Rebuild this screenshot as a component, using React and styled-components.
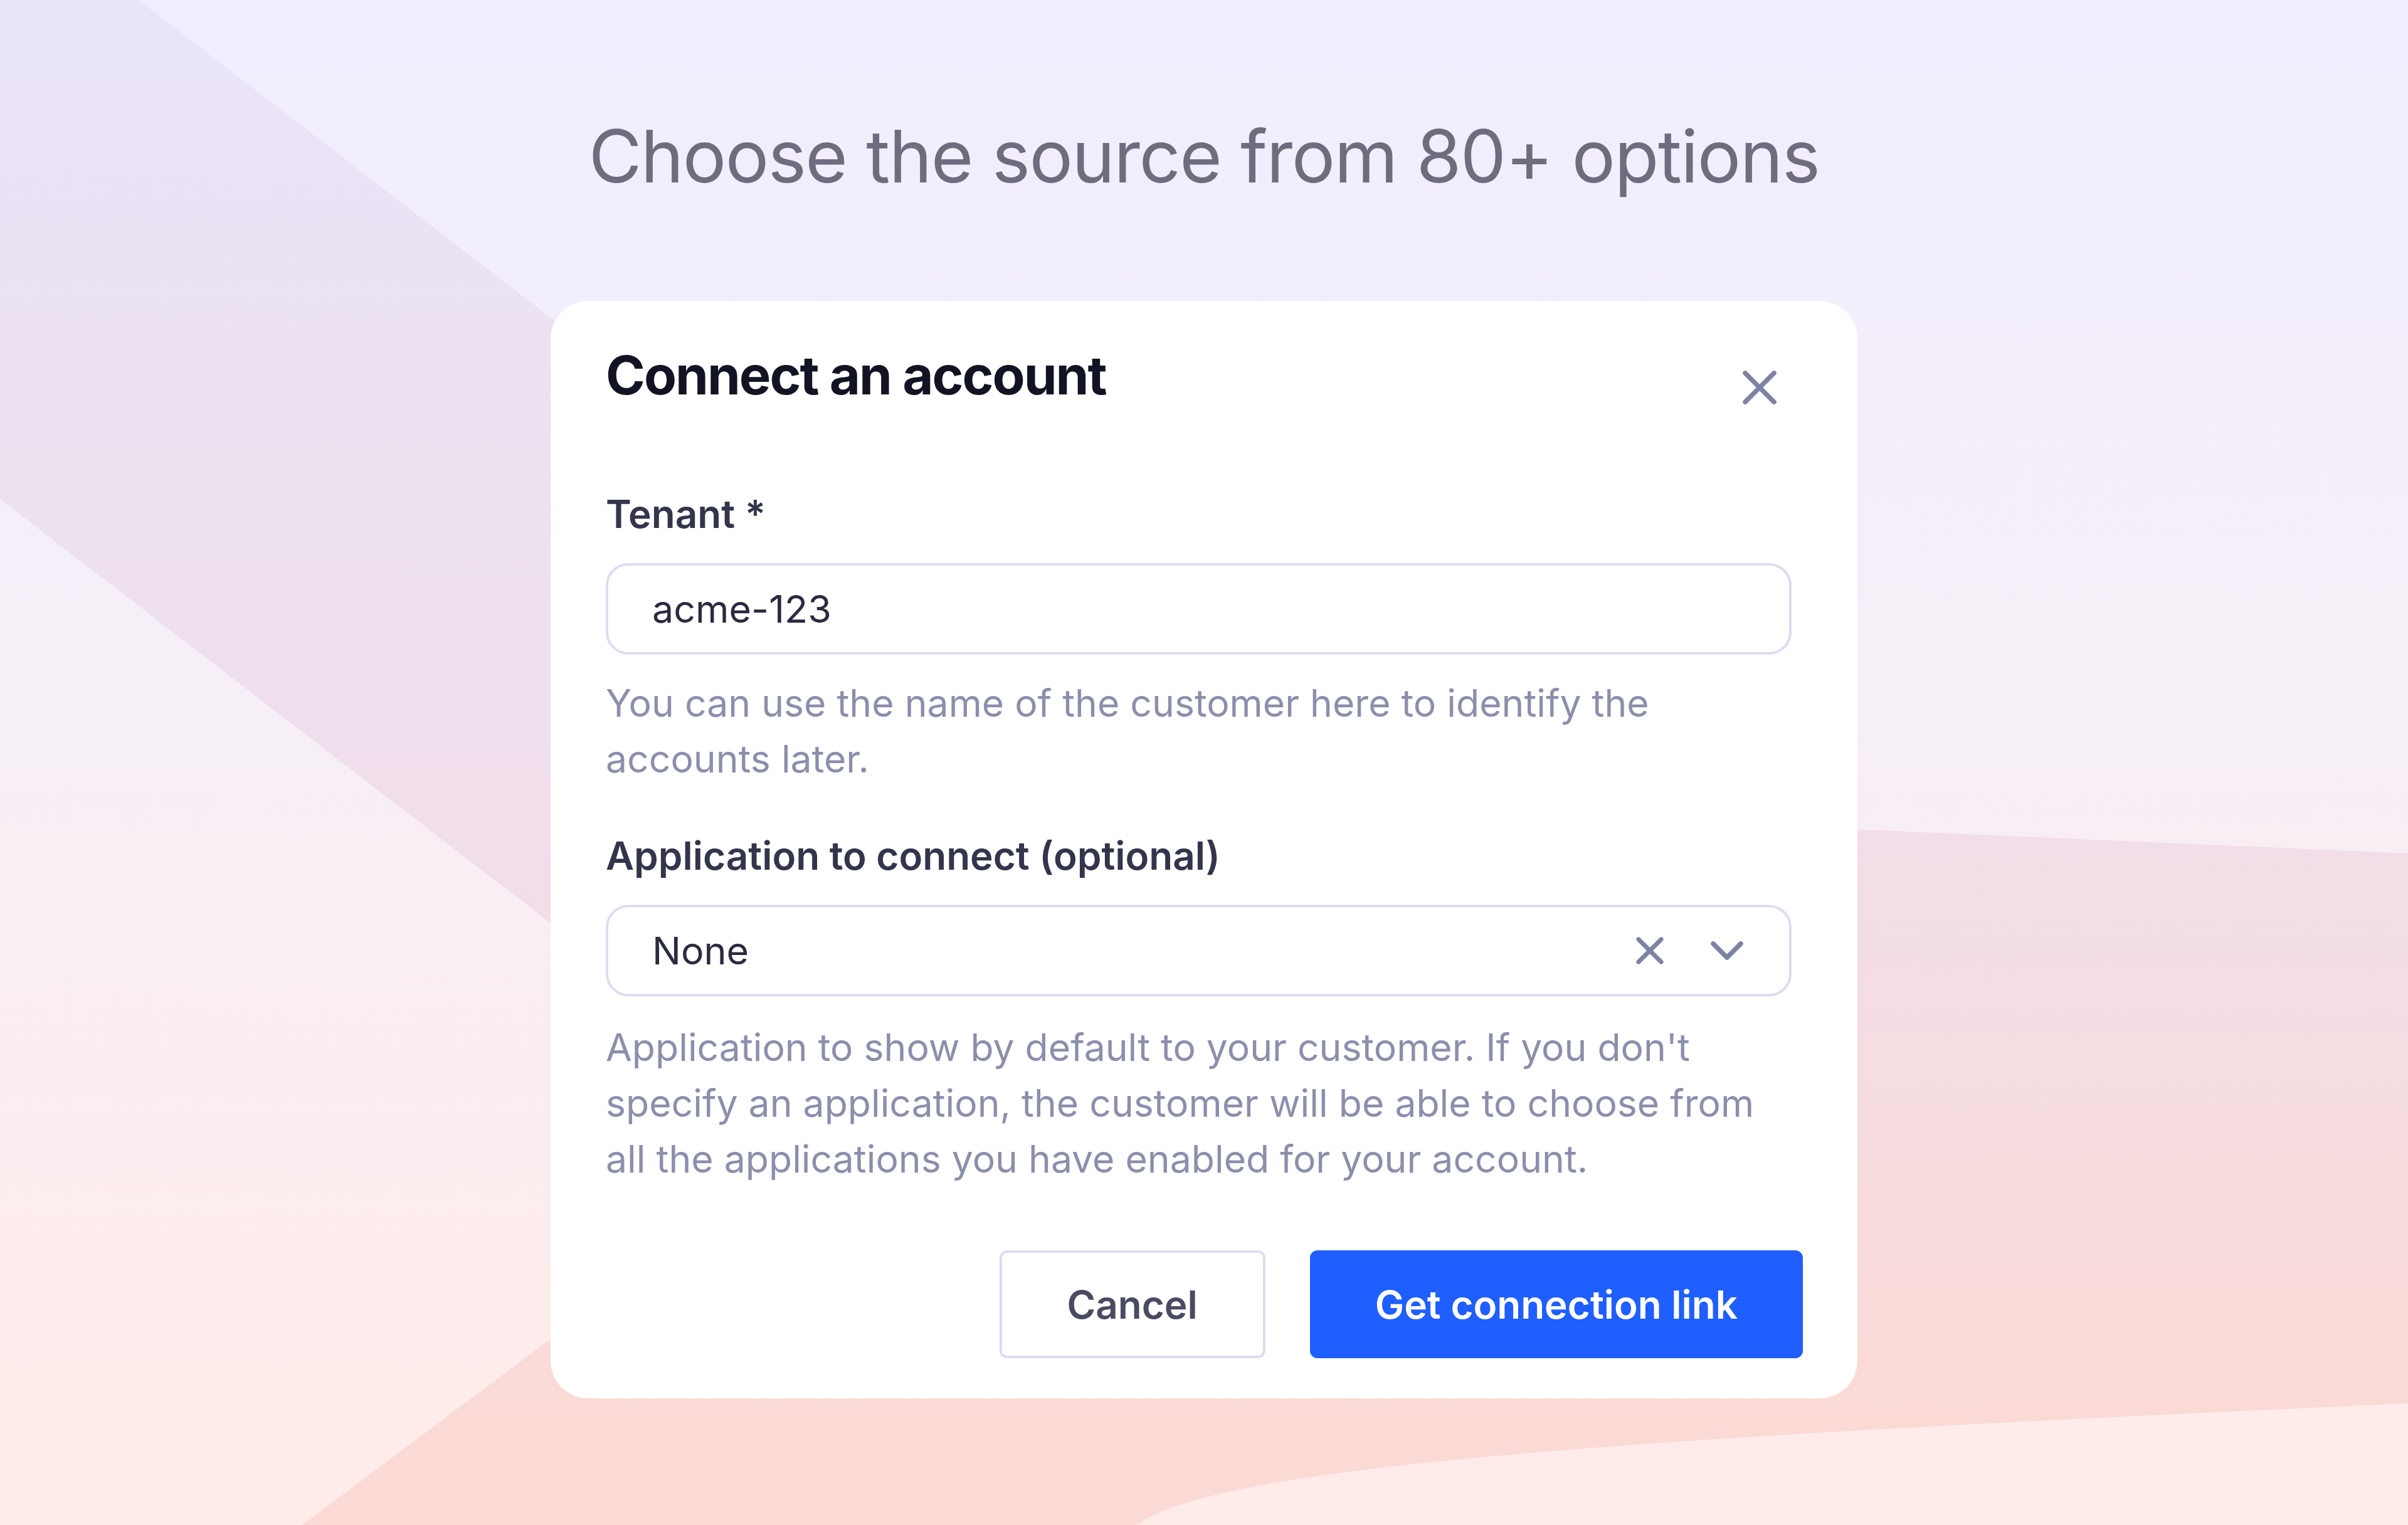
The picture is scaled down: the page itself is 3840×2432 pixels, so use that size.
import React from "react";
import styled, { createGlobalStyle } from "styled-components";

const GlobalStyle = createGlobalStyle`
  html, body {
    margin: 0;
    padding: 0;
  }
  body {
    font-family: Inter, "Noto Sans", "Liberation Sans", sans-serif;
    -webkit-font-smoothing: antialiased;
  }
  * {
    box-sizing: border-box;
  }
`;

const Page = styled.div`
  position: relative;
  width: 3840px;
  height: 2432px;
  overflow: hidden;
  background: #f0edfe;
`;

const Backdrop = styled.svg`
  position: absolute;
  inset: 0;
  width: 100%;
  height: 100%;
  z-index: 0;
`;

const Content = styled.main`
  position: relative;
  z-index: 1;
  display: flex;
  flex-direction: column;
  align-items: center;
  padding-top: 180px;
`;

const Headline = styled.h1`
  margin: 0 0 161px;
  font-size: 116px;
  line-height: 139px;
  font-weight: 400;
  letter-spacing: -1.6px;
  color: #6f6c80;
`;

const Card = styled.section`
  width: 2084px;
  background: #ffffff;
  border-radius: 60px;
  padding: 68px 87px 64px 88px;
  display: flex;
  flex-direction: column;
`;

const Header = styled.header`
  display: flex;
  justify-content: space-between;
  align-items: flex-start;
`;

const Title = styled.h2`
  margin: 0;
  font-size: 85px;
  line-height: 102px;
  font-weight: 700;
  letter-spacing: -2px;
  color: #121424;
`;

const IconButton = styled.button`
  display: flex;
  align-items: center;
  justify-content: center;
  padding: 0;
  border: none;
  background: none;
  color: #7d83a3;
  margin-top: ${(p) => p.$top || 0}px;
  margin-right: ${(p) => p.$right || 0}px;
  cursor: pointer;
`;

const Field = styled.div`
  display: flex;
  flex-direction: column;
  margin-top: ${(p) => p.$top}px;
  margin-right: 18px;
`;

const Label = styled.label`
  font-size: 62px;
  line-height: 90px;
  font-weight: 600;
  color: #33354c;
`;

const Box = styled.div`
  margin-top: 33px;
  height: 146px;
  border: 4px solid #dddcf0;
  border-radius: 36px;
  padding: 0 73px 0 70px;
  display: flex;
  align-items: center;
  gap: 75px;
  font-size: 61px;
  color: #2a2b3f;
`;

const Value = styled.span`
  flex: 1;
`;

const Help = styled.p`
  margin: ${(p) => p.$top}px 0 0;
  font-size: 60.7px;
  line-height: 89px;
  font-weight: 400;
  color: #8b8fab;
`;

const Actions = styled.div`
  display: flex;
  justify-content: flex-end;
  gap: 71px;
  margin-top: 101px;
`;

const Button = styled.button`
  height: 172px;
  padding: 0 ${(p) => (p.$primary ? 100 : 104)}px;
  border-radius: 12px;
  font-family: inherit;
  font-size: 62px;
  font-weight: 600;
  border: 4px solid ${(p) => (p.$primary ? "#1f5eff" : "#dcdbef")};
  background: ${(p) => (p.$primary ? "#1f5eff" : "#ffffff")};
  color: ${(p) => (p.$primary ? "#ffffff" : "#4a4b60")};
`;

const CloseIcon = ({ size = 56, stroke = 7.5 }) => (
  <svg width={size} height={size} viewBox="0 0 56 56" fill="none">
    <path
      d="M5 5 L51 51 M51 5 L5 51"
      stroke="currentColor"
      strokeWidth={stroke}
      strokeLinecap="round"
    />
  </svg>
);

const ChevronIcon = () => (
  <svg width="52" height="30" viewBox="0 0 52 30" fill="none">
    <path
      d="M4 4 L26 26 L48 4"
      stroke="currentColor"
      strokeWidth="7.5"
      strokeLinecap="round"
      strokeLinejoin="round"
    />
  </svg>
);

const Background = () => (
  <Backdrop viewBox="0 0 3840 2432" preserveAspectRatio="none">
    <defs>
      <linearGradient id="base" x1="0" y1="0" x2="0" y2="1">
        <stop offset="0" stopColor="#f0edfe" />
        <stop offset="0.45" stopColor="#f6eff7" />
        <stop offset="1" stopColor="#ffebe8" />
      </linearGradient>
      <linearGradient id="band" gradientUnits="userSpaceOnUse" x1="0" y1="0" x2="0" y2="1500">
        <stop offset="0" stopColor="#e9e5f8" />
        <stop offset="1" stopColor="#f1dde8" />
      </linearGradient>
      <linearGradient id="peach" gradientUnits="userSpaceOnUse" x1="0" y1="1320" x2="0" y2="2300">
        <stop offset="0" stopColor="#f1dee8" />
        <stop offset="1" stopColor="#fbdad5" />
      </linearGradient>
    </defs>
    <rect width="3840" height="2432" fill="url(#base)" />
    <path d="M0 0 L221 0 L1600 1063 L1600 2028 L0 796 Z" fill="url(#band)" />
    <path
      d="M482 2432 L1300 1819 L2900 1819 L2900 1320 L3840 1361 L3840 2238 C2700 2290 1950 2330 1812 2432 Z"
      fill="url(#peach)"
    />
  </Backdrop>
);

export default function App() {
  return (
    <>
      <GlobalStyle />
      <Page>
        <Background />
        <Content>
          <Headline>Choose the source from 80+ options</Headline>
          <Card>
            <Header>
              <Title>Connect an account</Title>
              <IconButton $top={42} $right={41} aria-label="Close">
                <CloseIcon />
              </IconButton>
            </Header>

            <Field $top={125}>
              <Label>Tenant *</Label>
              <Box>
                <Value>acme-123</Value>
              </Box>
              <Help $top={33}>
                You can use the name of the customer here to identify the
                accounts later.
              </Help>
            </Field>

            <Field $top={65}>
              <Label>Application to connect (optional)</Label>
              <Box>
                <Value>None</Value>
                <IconButton aria-label="Clear">
                  <CloseIcon size={44} stroke={9} />
                </IconButton>
                <IconButton aria-label="Open">
                  <ChevronIcon />
                </IconButton>
              </Box>
              <Help $top={37}>
                Application to show by default to your customer. If you don't
                specify an application, the customer will be able to choose from
                all the applications you have enabled for your account.
              </Help>
            </Field>

            <Actions>
              <Button>Cancel</Button>
              <Button $primary>Get connection link</Button>
            </Actions>
          </Card>
        </Content>
      </Page>
    </>
  );
}
